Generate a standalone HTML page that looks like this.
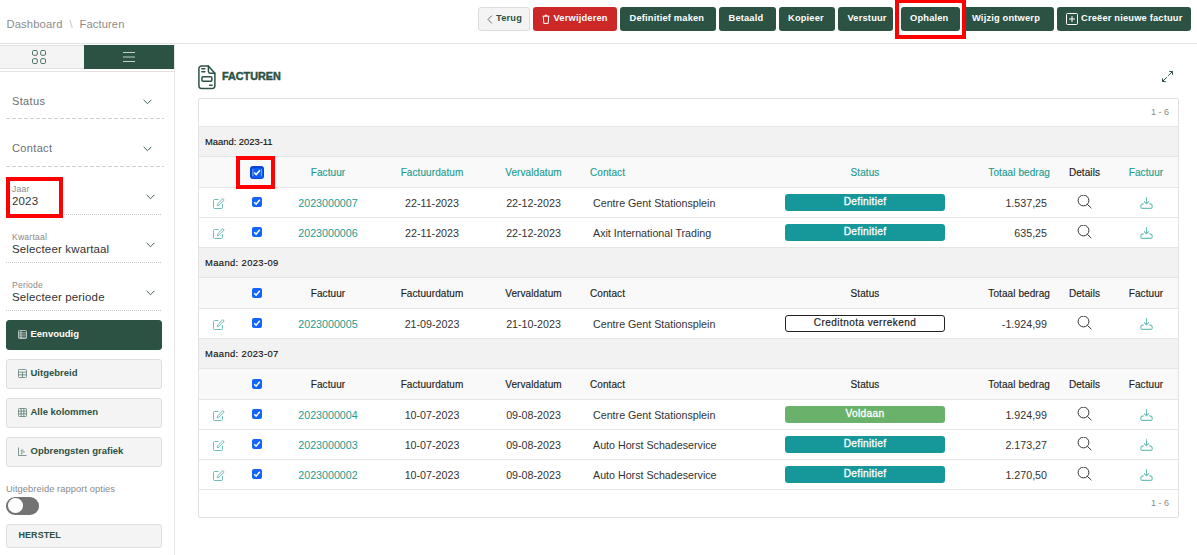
<!DOCTYPE html>
<html><head><meta charset="utf-8">
<style>
*{box-sizing:border-box;margin:0;padding:0}
html,body{width:1197px;height:555px;overflow:hidden;background:#fff}
body{position:relative;font-family:"Liberation Sans",sans-serif;color:#333}
.a{position:absolute;white-space:nowrap}
.hb{position:absolute;top:7px;height:24px;border-radius:3px;background:#2c5244;color:#fff;font-weight:bold;font-size:9.3px;letter-spacing:0.18px;line-height:22px;text-align:left}
.rb{position:absolute;border:4px solid #ff0000}
.sl{position:absolute;left:12px;font-size:11px;color:#6f6f6f;line-height:11px;letter-spacing:0.35px}
.chev{position:absolute;width:6px;height:6px;border-right:1.2px solid #2c5244;border-bottom:1.2px solid #2c5244;transform:rotate(45deg)}
.dash{position:absolute;left:6px;width:158px;height:1px;background-image:linear-gradient(90deg,#cfcfcf 66%,transparent 66%);background-size:6px 1px}
.dot{position:absolute;left:6px;width:156px;height:1px;background-image:linear-gradient(90deg,#c8c8c8 50%,transparent 50%);background-size:2px 1px}
.lab{position:absolute;left:12px;font-size:8.6px;line-height:8px;color:#8a8a8a;letter-spacing:0.2px}
.val{position:absolute;left:12px;font-size:11.5px;line-height:12px;color:#333;letter-spacing:0.15px}
.sb{position:absolute;left:6px;width:156px;height:30px;border-radius:3px;background:#f4f4f4;border:1px solid #dedede;color:#2c5244;font-weight:bold;font-size:9.5px}
.sb span{position:absolute;left:23.5px;top:8px;line-height:10px}
.sb svg{position:absolute;left:11px;top:9px;width:9px;height:9px}
</style></head><body>

<!-- header -->
<div class="a" style="left:6.5px;top:18px;font-size:11.2px;line-height:12px;color:#8c8c8c;letter-spacing:0.15px">Dashboard</div><div class="a" style="left:69.5px;top:18px;font-size:11.2px;line-height:12px;color:#c4c4c4">\</div><div class="a" style="left:79.5px;top:18px;font-size:11.2px;line-height:12px;color:#8c8c8c;letter-spacing:0.1px">Facturen</div>
<div class="a" style="left:0;top:43px;width:1197px;height:1px;background:#e3e3e3"></div>

<div class="hb" style="left:478px;width:52px;background:#f4f4f4;border:1px solid #dcdcdc;color:#2c5244"><svg style="position:absolute;left:8px;top:7px" width="6" height="9" viewBox="0 0 6 9"><path d="M4.8 .6L1 4.5l3.8 3.9" fill="none" stroke="#6a6a6a" stroke-width="1"/></svg><span style="position:absolute;left:17px;top:-1px;line-height:22px">Terug</span></div>
<div class="hb" style="left:533px;width:84px;background:#cd2828"><svg style="position:absolute;left:9px;top:7px" width="8" height="10" viewBox="0 0 8 10"><g fill="none" stroke="#fff" stroke-width="1"><path d="M.6 2.2h6.8M2.6 2.2c0-1.6 2.8-1.6 2.8 0M1.3 2.2l.5 7.2h4.4l.5-7.2"/></g></svg><span style="position:absolute;left:20.5px">Verwijderen</span></div>
<div class="hb" style="left:620px;width:96px"><span style="position:absolute;left:9.5px">Definitief maken</span></div>
<div class="hb" style="left:719px;width:57px"><span style="position:absolute;left:9.5px">Betaald</span></div>
<div class="hb" style="left:779px;width:56px"><span style="position:absolute;left:9px">Kopieer</span></div>
<div class="hb" style="left:838px;width:55px"><span style="position:absolute;left:9.5px">Verstuur</span></div>
<div class="hb" style="left:901px;width:59px"><span style="position:absolute;left:9px">Ophalen</span></div>
<div class="hb" style="left:963px;width:91px"><span style="position:absolute;left:9px">Wijzig ontwerp</span></div>
<div class="hb" style="left:1057px;width:134px"><svg style="position:absolute;left:9px;top:6px" width="12" height="12" viewBox="0 0 12 12"><rect x="0.5" y="0.5" width="11" height="11" rx="1" fill="none" stroke="#fff" stroke-width="1"/><path d="M6 3v6M3 6h6" stroke="#fff" stroke-width="1"/></svg><span style="position:absolute;left:24px">Creëer nieuwe factuur</span></div>
<div class="rb" style="left:895px;top:-1px;width:71px;height:40px"></div>

<!-- sidebar -->
<div class="a" style="left:174px;top:44px;width:1px;height:511px;background:#e6e6e6"></div>
<div class="a" style="left:0;top:45px;width:84px;height:24px;background:#f4f4f4;border-top:1px solid #e2e2e2;border-bottom:1px solid #e2e2e2"></div>
<div class="a" style="left:84px;top:45px;width:90px;height:24px;background:#2c5244"></div>
<div class="a" style="left:0;top:71px;width:174px;height:1px;background:#e3e3e3"></div>
<svg class="a" style="left:32px;top:50px" width="14" height="14" viewBox="0 0 14 14"><g fill="none" stroke="#4f7567" stroke-width="1"><rect x="0.5" y="0.5" width="4.8" height="4.8" rx="1.2"/><rect x="8.7" y="0.5" width="4.8" height="4.8" rx="1.2"/><rect x="0.5" y="8.7" width="4.8" height="4.8" rx="1.2"/><rect x="8.7" y="8.7" width="4.8" height="4.8" rx="1.2"/></g></svg>
<svg class="a" style="left:123px;top:52px" width="12" height="11" viewBox="0 0 12 11"><g stroke="#c3cfc9" stroke-width="1"><path d="M0 .5h12M0 5h12M0 9.5h12"/></g></svg>

<div class="sl" style="top:96px">Status</div><svg class="a" style="left:142.5px;top:98.5px" width="9" height="6" viewBox="0 0 9 6"><path d="M.6 .8l3.9 3.9 3.9-3.9" fill="none" stroke="#3d5f52" stroke-width="1"/></svg>
<div class="dash" style="top:118px"></div>
<div class="sl" style="top:143px">Contact</div><svg class="a" style="left:142.5px;top:145.5px" width="9" height="6" viewBox="0 0 9 6"><path d="M.6 .8l3.9 3.9 3.9-3.9" fill="none" stroke="#3d5f52" stroke-width="1"/></svg>
<div class="dash" style="top:166px"></div>

<div class="lab" style="top:185px">Jaar</div><div class="val" style="top:195px">2023</div><svg class="a" style="left:145.5px;top:193.5px" width="9" height="6" viewBox="0 0 9 6"><path d="M.6 .8l3.9 3.9 3.9-3.9" fill="none" stroke="#3d5f52" stroke-width="1"/></svg>
<div class="dot" style="top:214px"></div>
<div class="lab" style="top:233px">Kwartaal</div><div class="val" style="top:243px">Selecteer kwartaal</div><svg class="a" style="left:145.5px;top:241.5px" width="9" height="6" viewBox="0 0 9 6"><path d="M.6 .8l3.9 3.9 3.9-3.9" fill="none" stroke="#3d5f52" stroke-width="1"/></svg>
<div class="dot" style="top:262px"></div>
<div class="lab" style="top:281px">Periode</div><div class="val" style="top:291px">Selecteer periode</div><svg class="a" style="left:145.5px;top:289.5px" width="9" height="6" viewBox="0 0 9 6"><path d="M.6 .8l3.9 3.9 3.9-3.9" fill="none" stroke="#3d5f52" stroke-width="1"/></svg>
<div class="dot" style="top:310px"></div>
<div class="rb" style="left:6px;top:177px;width:57px;height:41px"></div>

<div class="sb" style="top:320px;background:#2c5244;border-color:#2c5244;color:#fff"><svg width="10" height="10" viewBox="0 0 10 10"><g fill="none" stroke="#e8eeeb" stroke-width="0.8"><rect x="0.5" y="0.5" width="9" height="9" rx="1"/><path d="M0.5 3.2h9M0.5 5.6h9M0.5 8h9M3.3 0.5v9"/></g></svg><span>Eenvoudig</span></div>
<div class="sb" style="top:359px"><svg width="10" height="10" viewBox="0 0 10 10"><g fill="none" stroke="#4a6e61" stroke-width="0.8"><rect x="0.5" y="0.5" width="9" height="9" rx="1"/><path d="M0.5 3.5h9M0.5 6.5h9M5 3.5v6"/></g></svg><span>Uitgebreid</span></div>
<div class="sb" style="top:398px"><svg width="10" height="10" viewBox="0 0 10 10"><g fill="none" stroke="#4a6e61" stroke-width="0.8"><rect x="0.5" y="0.5" width="9" height="9" rx="1"/><path d="M0.5 3.5h9M0.5 6.5h9M3.5 0.5v9M6.5 0.5v9"/></g></svg><span>Alle kolommen</span></div>
<div class="sb" style="top:437px"><svg width="10" height="10" viewBox="0 0 10 10"><g fill="none" stroke="#4a6e61" stroke-width="0.8"><path d="M0.5 0.5v9h9M3 3.5h3M3 5.5h4.5M3 7.5h2"/></g></svg><span>Opbrengsten grafiek</span></div>

<div class="a" style="left:6px;top:485px;font-size:9.3px;line-height:9px;color:#8a8a8a;letter-spacing:0.08px">Uitgebreide rapport opties</div>
<div class="a" style="left:6px;top:497px;width:33px;height:18px;border-radius:9px;background:#737373"></div>
<div class="a" style="left:7.5px;top:498px;width:15px;height:15px;border-radius:50%;background:#fff"></div>
<div class="sb" style="top:524px;height:24px"><span style="left:11.5px;top:5px;font-size:9px;letter-spacing:0.05px">HERSTEL</span></div>

<!-- main -->
<div id="main">
<svg class="a" style="left:198px;top:65px" width="19" height="25" viewBox="0 0 19 25"><g fill="none" stroke="#2c5244" stroke-width="1.5" stroke-linejoin="round" stroke-linecap="round"><path d="M3.5 .9h6.8l6.6 7.3V20.8a2.6 2.6 0 0 1-2.6 2.6H3.5A2.6 2.6 0 0 1 .9 20.8V3.5A2.6 2.6 0 0 1 3.5 .9z"/><path d="M10.4 1v5.2a2.1 2.1 0 0 0 2.1 2.1h4.3"/><path d="M3.8 3.8h3M3.8 6.7h3M11.6 20.3h2.6"/><rect x="3.9" y="11.7" width="10" height="4.6" rx="1.2"/></g></svg>
<div class="a" style="left:222px;top:70px;font-size:10.8px;line-height:12px;font-weight:bold;color:#2c5244;-webkit-text-stroke:0.45px #2c5244">FACTUREN</div>
<svg class="a" style="left:1161px;top:70px" width="13" height="13" viewBox="0 0 13 13"><g fill="none" stroke="#2c5244" stroke-width="1"><path d="M7.1 5.8L11.5 1.5M8.3 1.5H11.5V4.7M5.8 7.2L1.5 11.5M1.5 8.3V11.5H4.7"/></g></svg>
<div class="a" style="left:198px;top:98px;width:981px;height:420px;border:1px solid #e2e2e2;border-radius:2px"></div>
<div class="a" style="left:1140px;top:106.5px;width:29px;text-align:right;font-size:9px;line-height:10px;color:#8a8a8a">1 - 6</div>
<div class="a" style="left:1140px;top:497.5px;width:29px;text-align:right;font-size:9px;line-height:10px;color:#8a8a8a">1 - 6</div>
<div class="a" style="left:199px;top:126px;width:979px;height:30px;background:#f2f2f2;border-top:1px solid #e6e6e6"></div>
<div class="a" style="left:205px;top:135px;font-size:9.4px;line-height:14px;letter-spacing:0px;color:#111;-webkit-text-stroke:0.15px #111">Maand: 2023-11</div>
<div class="a" style="left:199px;top:156px;width:979px;height:31px;background:#f9f9f9;border-top:1px solid #e6e6e6"></div>
<div class="a" style="left:250px;top:166px;width:14px;height:13px;border-radius:3px;background:#0a42d4"><div style="position:absolute;left:1.5px;top:1.5px;width:11px;height:10px;border-radius:1.5px;background:#0c5cf7"></div><svg style="position:absolute;left:0;top:0" width="14" height="13" viewBox="0 0 14 13"><g fill="none" stroke="#fff"><path d="M2.8 3v7.2M11.4 3v7.2" stroke-width="0.6" stroke-opacity="0.8"/><path d="M4.3 6.6l1.9 1.9 3.7-4.3" stroke-width="1.6"/></g></svg></div>
<div class="a" style="left:268px;width:120px;text-align:center;top:165.5px;font-size:10px;line-height:14px;letter-spacing:0.08px;color:#239c90;-webkit-text-stroke:0.15px #239c90">Factuur</div>
<div class="a" style="left:372px;width:120px;text-align:center;top:165.5px;font-size:10px;line-height:14px;letter-spacing:0.08px;color:#239c90;-webkit-text-stroke:0.15px #239c90">Factuurdatum</div>
<div class="a" style="left:473.5px;width:120px;text-align:center;top:165.5px;font-size:10px;line-height:14px;letter-spacing:0.08px;color:#239c90;-webkit-text-stroke:0.15px #239c90">Vervaldatum</div>
<div class="a" style="left:590px;top:165.5px;font-size:10px;line-height:14px;letter-spacing:0.08px;color:#239c90;-webkit-text-stroke:0.15px #239c90">Contact</div>
<div class="a" style="left:805px;width:120px;text-align:center;top:165.5px;font-size:10px;line-height:14px;letter-spacing:0.08px;color:#239c90;-webkit-text-stroke:0.15px #239c90">Status</div>
<div class="a" style="left:950px;width:100px;text-align:right;top:165.5px;font-size:10px;line-height:14px;letter-spacing:0.08px;color:#239c90;-webkit-text-stroke:0.15px #239c90">Totaal bedrag</div>
<div class="a" style="left:1024.5px;width:120px;text-align:center;top:165.5px;font-size:10px;line-height:14px;letter-spacing:0.08px;color:#222;-webkit-text-stroke:0.15px #222">Details</div>
<div class="a" style="left:1086px;width:120px;text-align:center;top:165.5px;font-size:10px;line-height:14px;letter-spacing:0.08px;color:#239c90;-webkit-text-stroke:0.15px #239c90">Factuur</div>
<div class="a" style="left:199px;top:187px;width:979px;height:30px;background:#fff;border-top:1px solid #e6e6e6"></div>
<svg class="a" style="left:213px;top:198px" width="12" height="11" viewBox="0 0 12 11"><g fill="none" stroke="#6cbfb6" stroke-width="1" stroke-linecap="round" stroke-linejoin="round"><path d="M5 1.5H1.5a1 1 0 0 0-1 1V9.5a1 1 0 0 0 1 1h7a1 1 0 0 0 1-1V6.5"/><path d="M10 .8l1.2 1.2L6 7.2 4.2 7.8 4.8 6z"/></g></svg>
<div class="a" style="left:252px;top:197px;width:10px;height:10px;border-radius:2px;background:#1264fb"><svg style="position:absolute;left:0;top:0" width="10" height="10" viewBox="0 0 10 10"><path d="M2.3 5.3l1.8 1.9 3.7-4.4" fill="none" stroke="#fff" stroke-width="1.5"/></svg></div>
<div class="a" style="left:268px;width:120px;text-align:center;top:196px;font-size:10.7px;line-height:14px;color:#239c90">2023000007</div>
<div class="a" style="left:372px;width:120px;text-align:center;top:196px;font-size:10.7px;line-height:14px;color:#333">22-11-2023</div>
<div class="a" style="left:473.5px;width:120px;text-align:center;top:196px;font-size:10.7px;line-height:14px;color:#333">22-12-2023</div>
<div class="a" style="left:593px;top:196px;font-size:10.7px;line-height:14px;color:#333">Centre Gent Stationsplein</div>
<div class="a" style="left:785px;top:194px;width:160px;height:17px;border-radius:3px;background:#16989b;color:#fff;text-align:center;font-size:10.2px;letter-spacing:0.3px;-webkit-text-stroke:0.3px #fff;line-height:16.5px">Definitief</div>
<div class="a" style="left:947px;width:100px;text-align:right;top:196px;font-size:10.7px;line-height:14px;color:#333">1.537,25</div>
<svg class="a" style="left:1077px;top:195px" width="15" height="15" viewBox="0 0 15 15"><g fill="none" stroke="#333" stroke-width="1"><circle cx="6.5" cy="5.5" r="5.4"/><path d="M10.4 9.4l4 3.8"/></g></svg>
<svg class="a" style="left:1139.5px;top:197px" width="13" height="13" viewBox="0 0 13 13"><g fill="none" stroke="#6fc0b8" stroke-width="1.1" stroke-linecap="round"><path d="M6.5 .6v6M4.3 4.6L6.5 6.8l2.2-2.2"/><path d="M3.3 6.9C1.6 7.1 .8 8 .8 9.3v.6c0 .9.6 1.5 1.5 1.5h8.4c.9 0 1.5-.6 1.5-1.5v-.6c0-1.3-.8-2.2-2.5-2.4"/></g></svg>
<div class="a" style="left:199px;top:217px;width:979px;height:30px;background:#fff;border-top:1px solid #e6e6e6"></div>
<svg class="a" style="left:213px;top:228px" width="12" height="11" viewBox="0 0 12 11"><g fill="none" stroke="#6cbfb6" stroke-width="1" stroke-linecap="round" stroke-linejoin="round"><path d="M5 1.5H1.5a1 1 0 0 0-1 1V9.5a1 1 0 0 0 1 1h7a1 1 0 0 0 1-1V6.5"/><path d="M10 .8l1.2 1.2L6 7.2 4.2 7.8 4.8 6z"/></g></svg>
<div class="a" style="left:252px;top:227px;width:10px;height:10px;border-radius:2px;background:#1264fb"><svg style="position:absolute;left:0;top:0" width="10" height="10" viewBox="0 0 10 10"><path d="M2.3 5.3l1.8 1.9 3.7-4.4" fill="none" stroke="#fff" stroke-width="1.5"/></svg></div>
<div class="a" style="left:268px;width:120px;text-align:center;top:226px;font-size:10.7px;line-height:14px;color:#239c90">2023000006</div>
<div class="a" style="left:372px;width:120px;text-align:center;top:226px;font-size:10.7px;line-height:14px;color:#333">22-11-2023</div>
<div class="a" style="left:473.5px;width:120px;text-align:center;top:226px;font-size:10.7px;line-height:14px;color:#333">22-12-2023</div>
<div class="a" style="left:593px;top:226px;font-size:10.7px;line-height:14px;color:#333">Axit International Trading</div>
<div class="a" style="left:785px;top:224px;width:160px;height:17px;border-radius:3px;background:#16989b;color:#fff;text-align:center;font-size:10.2px;letter-spacing:0.3px;-webkit-text-stroke:0.3px #fff;line-height:16.5px">Definitief</div>
<div class="a" style="left:947px;width:100px;text-align:right;top:226px;font-size:10.7px;line-height:14px;color:#333">635,25</div>
<svg class="a" style="left:1077px;top:225px" width="15" height="15" viewBox="0 0 15 15"><g fill="none" stroke="#333" stroke-width="1"><circle cx="6.5" cy="5.5" r="5.4"/><path d="M10.4 9.4l4 3.8"/></g></svg>
<svg class="a" style="left:1139.5px;top:227px" width="13" height="13" viewBox="0 0 13 13"><g fill="none" stroke="#6fc0b8" stroke-width="1.1" stroke-linecap="round"><path d="M6.5 .6v6M4.3 4.6L6.5 6.8l2.2-2.2"/><path d="M3.3 6.9C1.6 7.1 .8 8 .8 9.3v.6c0 .9.6 1.5 1.5 1.5h8.4c.9 0 1.5-.6 1.5-1.5v-.6c0-1.3-.8-2.2-2.5-2.4"/></g></svg>
<div class="a" style="left:199px;top:247px;width:979px;height:30px;background:#f2f2f2;border-top:1px solid #e6e6e6"></div>
<div class="a" style="left:205px;top:256px;font-size:9.4px;line-height:14px;letter-spacing:0.38px;color:#111;-webkit-text-stroke:0.15px #111">Maand: 2023-09</div>
<div class="a" style="left:199px;top:277px;width:979px;height:31px;background:#f9f9f9;border-top:1px solid #e6e6e6"></div>
<div class="a" style="left:252px;top:288px;width:10px;height:10px;border-radius:2px;background:#1264fb"><svg style="position:absolute;left:0;top:0" width="10" height="10" viewBox="0 0 10 10"><path d="M2.3 5.3l1.8 1.9 3.7-4.4" fill="none" stroke="#fff" stroke-width="1.5"/></svg></div>
<div class="a" style="left:268px;width:120px;text-align:center;top:286.5px;font-size:10px;line-height:14px;letter-spacing:0.08px;color:#222;-webkit-text-stroke:0.15px #222">Factuur</div>
<div class="a" style="left:372px;width:120px;text-align:center;top:286.5px;font-size:10px;line-height:14px;letter-spacing:0.08px;color:#222;-webkit-text-stroke:0.15px #222">Factuurdatum</div>
<div class="a" style="left:473.5px;width:120px;text-align:center;top:286.5px;font-size:10px;line-height:14px;letter-spacing:0.08px;color:#222;-webkit-text-stroke:0.15px #222">Vervaldatum</div>
<div class="a" style="left:590px;top:286.5px;font-size:10px;line-height:14px;letter-spacing:0.08px;color:#222;-webkit-text-stroke:0.15px #222">Contact</div>
<div class="a" style="left:805px;width:120px;text-align:center;top:286.5px;font-size:10px;line-height:14px;letter-spacing:0.08px;color:#222;-webkit-text-stroke:0.15px #222">Status</div>
<div class="a" style="left:950px;width:100px;text-align:right;top:286.5px;font-size:10px;line-height:14px;letter-spacing:0.08px;color:#222;-webkit-text-stroke:0.15px #222">Totaal bedrag</div>
<div class="a" style="left:1024.5px;width:120px;text-align:center;top:286.5px;font-size:10px;line-height:14px;letter-spacing:0.08px;color:#222;-webkit-text-stroke:0.15px #222">Details</div>
<div class="a" style="left:1086px;width:120px;text-align:center;top:286.5px;font-size:10px;line-height:14px;letter-spacing:0.08px;color:#222;-webkit-text-stroke:0.15px #222">Factuur</div>
<div class="a" style="left:199px;top:308px;width:979px;height:30px;background:#fff;border-top:1px solid #e6e6e6"></div>
<svg class="a" style="left:213px;top:319px" width="12" height="11" viewBox="0 0 12 11"><g fill="none" stroke="#6cbfb6" stroke-width="1" stroke-linecap="round" stroke-linejoin="round"><path d="M5 1.5H1.5a1 1 0 0 0-1 1V9.5a1 1 0 0 0 1 1h7a1 1 0 0 0 1-1V6.5"/><path d="M10 .8l1.2 1.2L6 7.2 4.2 7.8 4.8 6z"/></g></svg>
<div class="a" style="left:252px;top:318px;width:10px;height:10px;border-radius:2px;background:#1264fb"><svg style="position:absolute;left:0;top:0" width="10" height="10" viewBox="0 0 10 10"><path d="M2.3 5.3l1.8 1.9 3.7-4.4" fill="none" stroke="#fff" stroke-width="1.5"/></svg></div>
<div class="a" style="left:268px;width:120px;text-align:center;top:317px;font-size:10.7px;line-height:14px;color:#239c90">2023000005</div>
<div class="a" style="left:372px;width:120px;text-align:center;top:317px;font-size:10.7px;line-height:14px;color:#333">21-09-2023</div>
<div class="a" style="left:473.5px;width:120px;text-align:center;top:317px;font-size:10.7px;line-height:14px;color:#333">21-10-2023</div>
<div class="a" style="left:593px;top:317px;font-size:10.7px;line-height:14px;color:#333">Centre Gent Stationsplein</div>
<div class="a" style="left:785px;top:315px;width:160px;height:17px;border-radius:3px;border:1px solid #222;background:#fff;color:#222;text-align:center;font-size:10px;letter-spacing:0.45px;line-height:14.5px;-webkit-text-stroke:0.2px #222">Creditnota verrekend</div>
<div class="a" style="left:947px;width:100px;text-align:right;top:317px;font-size:10.7px;line-height:14px;color:#333">-1.924,99</div>
<svg class="a" style="left:1077px;top:316px" width="15" height="15" viewBox="0 0 15 15"><g fill="none" stroke="#333" stroke-width="1"><circle cx="6.5" cy="5.5" r="5.4"/><path d="M10.4 9.4l4 3.8"/></g></svg>
<svg class="a" style="left:1139.5px;top:318px" width="13" height="13" viewBox="0 0 13 13"><g fill="none" stroke="#6fc0b8" stroke-width="1.1" stroke-linecap="round"><path d="M6.5 .6v6M4.3 4.6L6.5 6.8l2.2-2.2"/><path d="M3.3 6.9C1.6 7.1 .8 8 .8 9.3v.6c0 .9.6 1.5 1.5 1.5h8.4c.9 0 1.5-.6 1.5-1.5v-.6c0-1.3-.8-2.2-2.5-2.4"/></g></svg>
<div class="a" style="left:199px;top:338px;width:979px;height:30px;background:#f2f2f2;border-top:1px solid #e6e6e6"></div>
<div class="a" style="left:205px;top:347px;font-size:9.4px;line-height:14px;letter-spacing:0.38px;color:#111;-webkit-text-stroke:0.15px #111">Maand: 2023-07</div>
<div class="a" style="left:199px;top:368px;width:979px;height:31px;background:#f9f9f9;border-top:1px solid #e6e6e6"></div>
<div class="a" style="left:252px;top:379px;width:10px;height:10px;border-radius:2px;background:#1264fb"><svg style="position:absolute;left:0;top:0" width="10" height="10" viewBox="0 0 10 10"><path d="M2.3 5.3l1.8 1.9 3.7-4.4" fill="none" stroke="#fff" stroke-width="1.5"/></svg></div>
<div class="a" style="left:268px;width:120px;text-align:center;top:377.5px;font-size:10px;line-height:14px;letter-spacing:0.08px;color:#222;-webkit-text-stroke:0.15px #222">Factuur</div>
<div class="a" style="left:372px;width:120px;text-align:center;top:377.5px;font-size:10px;line-height:14px;letter-spacing:0.08px;color:#222;-webkit-text-stroke:0.15px #222">Factuurdatum</div>
<div class="a" style="left:473.5px;width:120px;text-align:center;top:377.5px;font-size:10px;line-height:14px;letter-spacing:0.08px;color:#222;-webkit-text-stroke:0.15px #222">Vervaldatum</div>
<div class="a" style="left:590px;top:377.5px;font-size:10px;line-height:14px;letter-spacing:0.08px;color:#222;-webkit-text-stroke:0.15px #222">Contact</div>
<div class="a" style="left:805px;width:120px;text-align:center;top:377.5px;font-size:10px;line-height:14px;letter-spacing:0.08px;color:#222;-webkit-text-stroke:0.15px #222">Status</div>
<div class="a" style="left:950px;width:100px;text-align:right;top:377.5px;font-size:10px;line-height:14px;letter-spacing:0.08px;color:#222;-webkit-text-stroke:0.15px #222">Totaal bedrag</div>
<div class="a" style="left:1024.5px;width:120px;text-align:center;top:377.5px;font-size:10px;line-height:14px;letter-spacing:0.08px;color:#222;-webkit-text-stroke:0.15px #222">Details</div>
<div class="a" style="left:1086px;width:120px;text-align:center;top:377.5px;font-size:10px;line-height:14px;letter-spacing:0.08px;color:#222;-webkit-text-stroke:0.15px #222">Factuur</div>
<div class="a" style="left:199px;top:399px;width:979px;height:30px;background:#fff;border-top:1px solid #e6e6e6"></div>
<svg class="a" style="left:213px;top:410px" width="12" height="11" viewBox="0 0 12 11"><g fill="none" stroke="#6cbfb6" stroke-width="1" stroke-linecap="round" stroke-linejoin="round"><path d="M5 1.5H1.5a1 1 0 0 0-1 1V9.5a1 1 0 0 0 1 1h7a1 1 0 0 0 1-1V6.5"/><path d="M10 .8l1.2 1.2L6 7.2 4.2 7.8 4.8 6z"/></g></svg>
<div class="a" style="left:252px;top:409px;width:10px;height:10px;border-radius:2px;background:#1264fb"><svg style="position:absolute;left:0;top:0" width="10" height="10" viewBox="0 0 10 10"><path d="M2.3 5.3l1.8 1.9 3.7-4.4" fill="none" stroke="#fff" stroke-width="1.5"/></svg></div>
<div class="a" style="left:268px;width:120px;text-align:center;top:408px;font-size:10.7px;line-height:14px;color:#239c90">2023000004</div>
<div class="a" style="left:372px;width:120px;text-align:center;top:408px;font-size:10.7px;line-height:14px;color:#333">10-07-2023</div>
<div class="a" style="left:473.5px;width:120px;text-align:center;top:408px;font-size:10.7px;line-height:14px;color:#333">09-08-2023</div>
<div class="a" style="left:593px;top:408px;font-size:10.7px;line-height:14px;color:#333">Centre Gent Stationsplein</div>
<div class="a" style="left:785px;top:406px;width:160px;height:17px;border-radius:3px;background:#6ab26c;color:#fff;text-align:center;font-size:10.2px;letter-spacing:0.3px;-webkit-text-stroke:0.3px #fff;line-height:16.5px">Voldaan</div>
<div class="a" style="left:947px;width:100px;text-align:right;top:408px;font-size:10.7px;line-height:14px;color:#333">1.924,99</div>
<svg class="a" style="left:1077px;top:407px" width="15" height="15" viewBox="0 0 15 15"><g fill="none" stroke="#333" stroke-width="1"><circle cx="6.5" cy="5.5" r="5.4"/><path d="M10.4 9.4l4 3.8"/></g></svg>
<svg class="a" style="left:1139.5px;top:409px" width="13" height="13" viewBox="0 0 13 13"><g fill="none" stroke="#6fc0b8" stroke-width="1.1" stroke-linecap="round"><path d="M6.5 .6v6M4.3 4.6L6.5 6.8l2.2-2.2"/><path d="M3.3 6.9C1.6 7.1 .8 8 .8 9.3v.6c0 .9.6 1.5 1.5 1.5h8.4c.9 0 1.5-.6 1.5-1.5v-.6c0-1.3-.8-2.2-2.5-2.4"/></g></svg>
<div class="a" style="left:199px;top:429px;width:979px;height:30px;background:#fff;border-top:1px solid #e6e6e6"></div>
<svg class="a" style="left:213px;top:440px" width="12" height="11" viewBox="0 0 12 11"><g fill="none" stroke="#6cbfb6" stroke-width="1" stroke-linecap="round" stroke-linejoin="round"><path d="M5 1.5H1.5a1 1 0 0 0-1 1V9.5a1 1 0 0 0 1 1h7a1 1 0 0 0 1-1V6.5"/><path d="M10 .8l1.2 1.2L6 7.2 4.2 7.8 4.8 6z"/></g></svg>
<div class="a" style="left:252px;top:439px;width:10px;height:10px;border-radius:2px;background:#1264fb"><svg style="position:absolute;left:0;top:0" width="10" height="10" viewBox="0 0 10 10"><path d="M2.3 5.3l1.8 1.9 3.7-4.4" fill="none" stroke="#fff" stroke-width="1.5"/></svg></div>
<div class="a" style="left:268px;width:120px;text-align:center;top:438px;font-size:10.7px;line-height:14px;color:#239c90">2023000003</div>
<div class="a" style="left:372px;width:120px;text-align:center;top:438px;font-size:10.7px;line-height:14px;color:#333">10-07-2023</div>
<div class="a" style="left:473.5px;width:120px;text-align:center;top:438px;font-size:10.7px;line-height:14px;color:#333">09-08-2023</div>
<div class="a" style="left:593px;top:438px;font-size:10.7px;line-height:14px;color:#333">Auto Horst Schadeservice</div>
<div class="a" style="left:785px;top:436px;width:160px;height:17px;border-radius:3px;background:#16989b;color:#fff;text-align:center;font-size:10.2px;letter-spacing:0.3px;-webkit-text-stroke:0.3px #fff;line-height:16.5px">Definitief</div>
<div class="a" style="left:947px;width:100px;text-align:right;top:438px;font-size:10.7px;line-height:14px;color:#333">2.173,27</div>
<svg class="a" style="left:1077px;top:437px" width="15" height="15" viewBox="0 0 15 15"><g fill="none" stroke="#333" stroke-width="1"><circle cx="6.5" cy="5.5" r="5.4"/><path d="M10.4 9.4l4 3.8"/></g></svg>
<svg class="a" style="left:1139.5px;top:439px" width="13" height="13" viewBox="0 0 13 13"><g fill="none" stroke="#6fc0b8" stroke-width="1.1" stroke-linecap="round"><path d="M6.5 .6v6M4.3 4.6L6.5 6.8l2.2-2.2"/><path d="M3.3 6.9C1.6 7.1 .8 8 .8 9.3v.6c0 .9.6 1.5 1.5 1.5h8.4c.9 0 1.5-.6 1.5-1.5v-.6c0-1.3-.8-2.2-2.5-2.4"/></g></svg>
<div class="a" style="left:199px;top:459px;width:979px;height:30px;background:#fff;border-top:1px solid #e6e6e6"></div>
<svg class="a" style="left:213px;top:470px" width="12" height="11" viewBox="0 0 12 11"><g fill="none" stroke="#6cbfb6" stroke-width="1" stroke-linecap="round" stroke-linejoin="round"><path d="M5 1.5H1.5a1 1 0 0 0-1 1V9.5a1 1 0 0 0 1 1h7a1 1 0 0 0 1-1V6.5"/><path d="M10 .8l1.2 1.2L6 7.2 4.2 7.8 4.8 6z"/></g></svg>
<div class="a" style="left:252px;top:469px;width:10px;height:10px;border-radius:2px;background:#1264fb"><svg style="position:absolute;left:0;top:0" width="10" height="10" viewBox="0 0 10 10"><path d="M2.3 5.3l1.8 1.9 3.7-4.4" fill="none" stroke="#fff" stroke-width="1.5"/></svg></div>
<div class="a" style="left:268px;width:120px;text-align:center;top:468px;font-size:10.7px;line-height:14px;color:#239c90">2023000002</div>
<div class="a" style="left:372px;width:120px;text-align:center;top:468px;font-size:10.7px;line-height:14px;color:#333">10-07-2023</div>
<div class="a" style="left:473.5px;width:120px;text-align:center;top:468px;font-size:10.7px;line-height:14px;color:#333">09-08-2023</div>
<div class="a" style="left:593px;top:468px;font-size:10.7px;line-height:14px;color:#333">Auto Horst Schadeservice</div>
<div class="a" style="left:785px;top:466px;width:160px;height:17px;border-radius:3px;background:#16989b;color:#fff;text-align:center;font-size:10.2px;letter-spacing:0.3px;-webkit-text-stroke:0.3px #fff;line-height:16.5px">Definitief</div>
<div class="a" style="left:947px;width:100px;text-align:right;top:468px;font-size:10.7px;line-height:14px;color:#333">1.270,50</div>
<svg class="a" style="left:1077px;top:467px" width="15" height="15" viewBox="0 0 15 15"><g fill="none" stroke="#333" stroke-width="1"><circle cx="6.5" cy="5.5" r="5.4"/><path d="M10.4 9.4l4 3.8"/></g></svg>
<svg class="a" style="left:1139.5px;top:469px" width="13" height="13" viewBox="0 0 13 13"><g fill="none" stroke="#6fc0b8" stroke-width="1.1" stroke-linecap="round"><path d="M6.5 .6v6M4.3 4.6L6.5 6.8l2.2-2.2"/><path d="M3.3 6.9C1.6 7.1 .8 8 .8 9.3v.6c0 .9.6 1.5 1.5 1.5h8.4c.9 0 1.5-.6 1.5-1.5v-.6c0-1.3-.8-2.2-2.5-2.4"/></g></svg>
<div class="a" style="left:199px;top:489px;width:979px;height:1px;background:#e6e6e6"></div>
<div class="rb" style="left:236px;top:156px;width:39px;height:33px"></div>
</div>
</body></html>
